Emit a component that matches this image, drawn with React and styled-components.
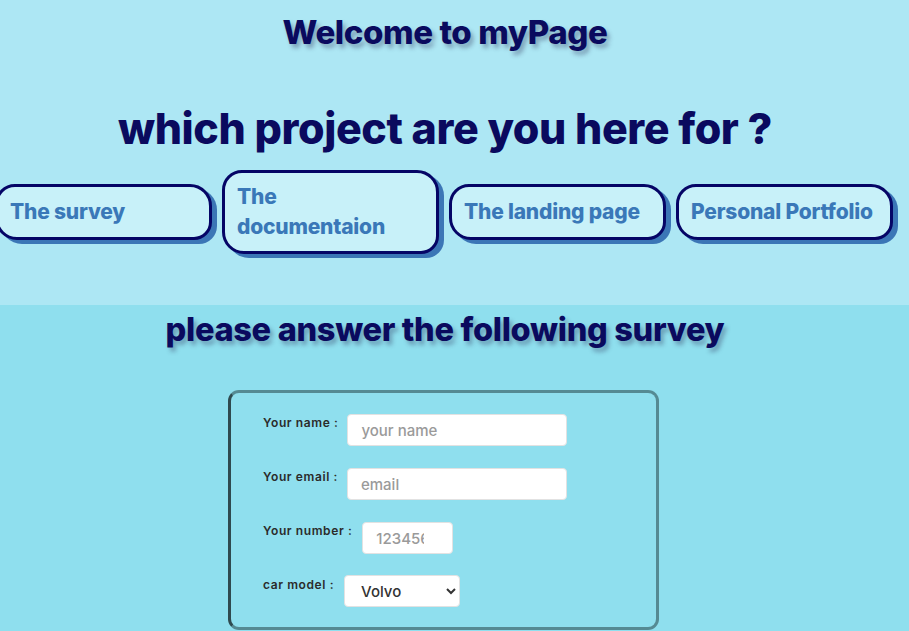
import styled, { createGlobalStyle } from "styled-components"

const GlobalStyle = createGlobalStyle`
    body {
        margin: 0;
        background: #8fdfee;
        font-family: "Inter", "Noto Sans", sans-serif;
    }
`

const Header = styled.header`
    background: #ade7f4;
    height: 305px;
    display: flex;
    flex-direction: column;
    align-items: center;
    box-sizing: border-box;
    padding: 12px 19px 0 0;
`

const Title = styled.h1`
    margin: 0;
    font-size: 33px;
    line-height: 40px;
    font-weight: 800;
    color: #0a0a5e;
    text-shadow: 3px 4px 4px rgba(40, 40, 80, 0.35);
    letter-spacing: -0.4px;
`

const Question = styled.h2`
    margin: 50px 0 0;
    font-size: 43px;
    line-height: 52px;
    font-weight: 800;
    color: #0a0a5e;
    letter-spacing: -0.4px;
`

const Projects = styled.nav`
    display: flex;
    align-items: center;
    gap: 10px;
    margin-top: 16px;
    margin-left: -5px;
    align-self: flex-start;
`

const ProjectButton = styled.a`
    box-sizing: border-box;
    width: 217px;
    min-height: 56px;
    padding: 9px 10px 9px 12px;
    display: flex;
    align-items: center;
    background: #c8f1f9;
    border: 3px solid #050566;
    border-radius: 20px 22px 18px 22px;
    box-shadow: 5px 4px 0 #3b76b6;
    color: #3a78b8;
    font-size: 21px;
    font-weight: 800;
    line-height: 30px;
    letter-spacing: -0.2px;
    text-decoration: none;
    cursor: pointer;
`

const Survey = styled.section`
    display: flex;
    flex-direction: column;
    align-items: center;
    padding: 5px 19px 0 0;
    height: 326px;
    box-sizing: border-box;
    overflow: hidden;
`

const SurveyTitle = styled.h2`
    margin: 0;
    font-size: 32.5px;
    line-height: 40px;
    font-weight: 800;
    color: #0a0a5e;
    text-shadow: 3px 4px 4px rgba(40, 40, 80, 0.35);
    letter-spacing: -0.3px;
`

const Form = styled.form`
    box-sizing: border-box;
    width: 431px;
    margin-top: 40px;
    margin-left: -3px;
    padding: 21px 20px 20px 32px;
    border: 3px solid #558a93;
    border-left-color: #2f4a4f;
    border-radius: 11px;
    display: flex;
    flex-direction: column;
    gap: 22px;
`

const Row = styled.div`
    display: flex;
    align-items: flex-start;
    gap: ${props => props.gap || 9}px;
`

const Label = styled.label`
    font-size: 12px;
    font-weight: 600;
    letter-spacing: 0.6px;
    color: #2b2b2b;
    padding-top: 1px;
`

const Input = styled.input`
    box-sizing: border-box;
    width: ${props => props.w}px;
    height: 32px;
    border: 1px solid #e2e2e2;
    border-radius: 4px;
    padding: 0 13px;
    font-family: "Inter", "Noto Sans", sans-serif;
    font-size: 15px;
    font-weight: 500;
    background: #fff;
    color: #333;
    outline: none;

    &::placeholder {
        color: #9a9a9a;
    }
`

const Select = styled.select`
    box-sizing: border-box;
    width: 116px;
    height: 32px;
    margin-top: -1px;
    border: 1px solid #e2e2e2;
    border-radius: 4px;
    padding: 0 8px 0 12px;
    font-family: "Inter", "Noto Sans", sans-serif;
    font-size: 15px;
    font-weight: 500;
    color: #333;
    background: #fff;
`

const projects = ["The survey", "The documentaion", "The landing page", "Personal Portfolio"]

export default function App() {
    return <>
        <GlobalStyle />
        <Header>
            <Title>Welcome to myPage</Title>
            <Question>which project are you here for ?</Question>
            <Projects>
                {projects.map((p, i) => <ProjectButton key={i}>{p}</ProjectButton>)}
            </Projects>
        </Header>
        <Survey>
            <SurveyTitle>please answer the following survey</SurveyTitle>
            <Form>
                <Row>
                    <Label htmlFor="name">Your name :</Label>
                    <Input id="name" w={220} placeholder="your name" />
                </Row>
                <Row>
                    <Label htmlFor="email">Your email :</Label>
                    <Input id="email" w={220} type="email" placeholder="email" />
                </Row>
                <Row gap={10}>
                    <Label htmlFor="number">Your number :</Label>
                    <Input id="number" w={91} type="number" placeholder="1234567890" />
                </Row>
                <Row gap={10}>
                    <Label htmlFor="car">car model :</Label>
                    <Select id="car" defaultValue="volvo">
                        <option value="volvo">Volvo</option>
                        <option value="saab">Saab</option>
                        <option value="mercedes">Mercedes</option>
                        <option value="audi">Audi</option>
                    </Select>
                </Row>
            </Form>
        </Survey>
    </>
}
